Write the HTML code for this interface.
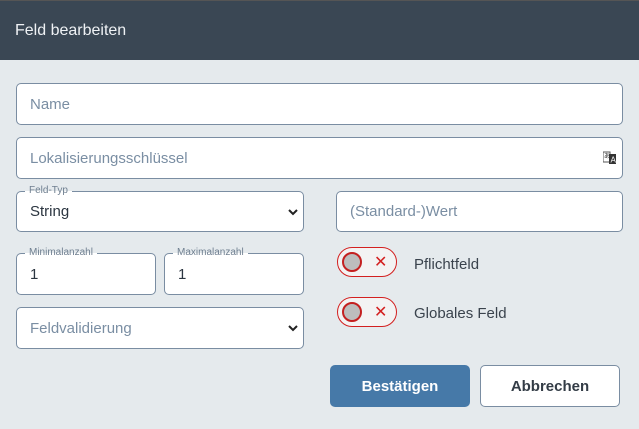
<!DOCTYPE html>
<html><head><meta charset="utf-8"><style>
*{box-sizing:border-box;margin:0;padding:0}
body{width:639px;height:429px;background:#e5eaed;font-family:"Liberation Sans",Arial,sans-serif;position:relative;overflow:hidden}
.hd{position:absolute;left:0;top:0;width:639px;height:60px;background:#3a4754;border-top:1px solid #555;color:#eef1f4;font-size:16px;padding:21px 0 0 15px}
.in{position:absolute;background:#fff;border:1px solid #7a8da2;border-radius:5px;font-size:15px;color:#7a8ea3;padding-left:13px;display:flex;align-items:center}
.in.v{color:#2b3540}
.lbl{position:absolute;top:-7px;left:8px;font-size:10px;color:#6f7f90;background:linear-gradient(#e5eaed 50%,#fff 50%);padding:0 4px;line-height:12px}
.chev{position:absolute;right:5px;top:50%;margin-top:-4px}
.tg{position:absolute;left:337px;width:60px;height:30px;border:1.5px solid #d32020;border-radius:15px;background:#f3f3f3}
.tg .k{position:absolute;left:4px;top:4px;width:20px;height:20px;border-radius:50%;border:2px solid #c42020;background:#bdbdbd}
.tg .x{position:absolute;left:36px;top:7px;color:#d32020;font-size:16px;line-height:16px}
.tl{position:absolute;left:414px;font-size:15px;color:#3a434d}
.btn{position:absolute;top:365px;height:42px;width:140px;border-radius:5px;font-size:15px;font-weight:bold;display:flex;align-items:center;justify-content:center}
</style></head><body>
<div class="hd">Feld bearbeiten</div>
<div class="in" style="left:16px;top:83px;width:607px;height:42px">Name</div>
<div class="in" style="left:16px;top:137px;width:607px;height:42px">Lokalisierungsschlüssel
<svg style="position:absolute;right:5px;top:13px" width="14" height="14" viewBox="0 0 14 14"><rect x="0" y="1" width="7" height="10" fill="#fff" stroke="#555" stroke-width="1"/><rect x="6" y="3" width="7" height="10" fill="#333"/><text x="7.5" y="11.5" font-size="8" fill="#fff" font-family="Liberation Sans">A</text><text x="1" y="7" font-size="6" fill="#333">あ</text></svg></div>
<div class="in v" style="left:16px;top:191px;width:288px;height:41px"><span class="lbl">Feld-Typ</span>String<svg class="chev" width="10" height="8"><path d="M1 2l4 4 4-4" stroke="#222" stroke-width="2" fill="none"/></svg></div>
<div class="in" style="left:336px;top:191px;width:287px;height:41px">(Standard-)Wert</div>
<div class="in v" style="left:16px;top:253px;width:140px;height:42px"><span class="lbl">Minimalanzahl</span>1</div>
<div class="in v" style="left:164px;top:253px;width:140px;height:42px"><span class="lbl">Maximalanzahl</span>1</div>
<div class="in" style="left:16px;top:307px;width:288px;height:42px">Feldvalidierung<svg class="chev" width="10" height="8"><path d="M1 2l4 4 4-4" stroke="#222" stroke-width="2" fill="none"/></svg></div>
<div class="tg" style="top:247px"><div class="k"></div><div class="x">✕</div></div>
<div class="tl" style="top:256px">Pflichtfeld</div>
<div class="tg" style="top:297px"><div class="k"></div><div class="x">✕</div></div>
<div class="tl" style="top:305px">Globales Feld</div>
<div class="btn" style="left:330px;background:#4679a8;color:#fff">Bestätigen</div>
<div class="btn" style="left:480px;background:#fff;border:1px solid #7a8da2;color:#333c46">Abbrechen</div>
</body></html>
